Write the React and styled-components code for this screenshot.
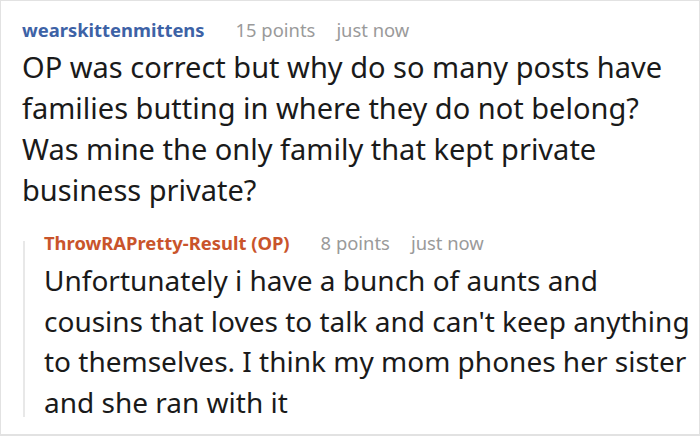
import React from "react";
import styled, { createGlobalStyle } from "styled-components";

const Global = createGlobalStyle`
  html, body {
    margin: 0;
    padding: 0;
    background: #ffffff;
  }
  body {
    font-family: "Noto Sans", "Open Sans", sans-serif;
  }
`;

const Frame = styled.div`
  box-sizing: border-box;
  width: 700px;
  height: 436px;
  border: 1px solid #e2e2e2;
  border-bottom-width: 2px;
  padding: 17px 0 0 21px;
  overflow: hidden;
`;

const Header = styled.div`
  display: flex;
  align-items: baseline;
  gap: 21px;
  font-size: 18.4px;
  line-height: 24px;
  white-space: nowrap;
`;

const Author = styled.span`
  font-weight: 700;
  color: ${(p) => (p.$op ? "#c9542b" : "#3d62a6")};
  margin-right: 10px;
`;

const Meta = styled.span`
  color: #9a9a9a;
`;

const Body = styled.div`
  font-size: 29px;
  line-height: 41px;
  color: #1a1a1a;
  margin-top: 4px;
  padding-right: 20px;
`;

const Reply = styled.div`
  position: relative;
  margin-top: 21px;
  padding-left: 22px;

  &::before {
    content: "";
    position: absolute;
    left: 1px;
    top: 10px;
    bottom: 6px;
    width: 2px;
    background: #e8e8e8;
  }
`;

const ReplyBody = styled(Body)`
  font-size: 28px;
  line-height: 40.7px;
  margin-top: 5px;
  padding-right: 0;
`;

const Comment = ({ author, op, points, time, children, reply }) => (
  <>
    <Header>
      <Author $op={op}>{author}</Author>
      <Meta>{points}</Meta>
      <Meta>{time}</Meta>
    </Header>
    {reply ? <ReplyBody>{children}</ReplyBody> : <Body>{children}</Body>}
  </>
);

export default function App() {
  return (
    <>
      <Global />
      <Frame>
        <Comment author="wearskittenmittens" points="15 points" time="just now">
          OP was correct but why do so many posts have families butting in
          where they do not belong? Was mine the only family that kept private
          business private?
        </Comment>
        <Reply>
          <Comment
            reply
            op
            author="ThrowRAPretty-Result (OP)"
            points="8 points"
            time="just now"
          >
            Unfortunately i have a bunch of aunts and cousins that loves to talk
            and can't keep anything to themselves. I think my mom phones her
            sister and she ran with it
          </Comment>
        </Reply>
      </Frame>
    </>
  );
}
